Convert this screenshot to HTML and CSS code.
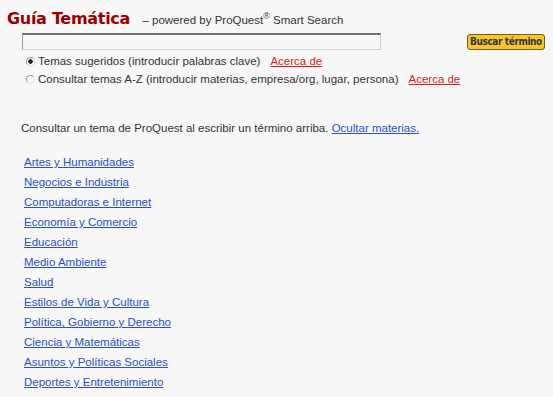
FILE: index.html
```html
<!DOCTYPE html>
<html lang="es">
<head>
	<meta charset="UTF-8">
	<title>Guía Temática</title>
	<link rel="stylesheet" href="styles.css">
</head>
<body>
	<div class="wrap">
		<h1 class="title"><span class="name">Guía Temática</span> <span class="powered">– powered by ProQuest<sup>®</sup> Smart Search</span></h1>
		<div class="search">
			<input type="text" class="term">
			<button class="btn">Buscar término</button>
		</div>
		<div class="opts">
			<label class="opt"><input type="radio" name="m" checked> Temas sugeridos (introducir palabras clave)</label><a href="#" class="about">Acerca de</a>
		</div>
		<div class="opts">
			<label class="opt"><input type="radio" name="m"> Consultar temas A-Z (introducir materias, empresa/org, lugar, persona)</label><a href="#" class="about">Acerca de</a>
		</div>
		<p class="intro">Consultar un tema de ProQuest al escribir un término arriba. <a href="#">Ocultar materias.</a></p>
		<ul class="topics">
			<li><a href="#">Artes y Humanidades</a></li>
			<li><a href="#">Negocios e Industria</a></li>
			<li><a href="#">Computadoras e Internet</a></li>
			<li><a href="#">Economía y Comercio</a></li>
			<li><a href="#">Educación</a></li>
			<li><a href="#">Medio Ambiente</a></li>
			<li><a href="#">Salud</a></li>
			<li><a href="#">Estilos de Vida y Cultura</a></li>
			<li><a href="#">Política, Gobierno y Derecho</a></li>
			<li><a href="#">Ciencia y Matemáticas</a></li>
			<li><a href="#">Asuntos y Políticas Sociales</a></li>
			<li><a href="#">Deportes y Entretenimiento</a></li>
		</ul>
	</div>
</body>
</html>
```
FILE: styles.css
```css
*{
	margin: 0;
	padding: 0;
}
body{
	background: #f7f7f7;
	font-family: "Liberation Sans", Arial, sans-serif;
	font-size: 11.5px;
	color: #333;
}
.wrap{padding: 5px 0 0 7px;}
.title{
	font-weight: normal;
	line-height: 22px;
	height: 22px;
	white-space: nowrap;
}
.title .name{
	font-family: "DejaVu Sans", Verdana, sans-serif;
	font-weight: bold;
	font-size: 16px;
	letter-spacing: -0.3px;
	color: #990000;
}
.title .powered{
	font-size: 11.5px;
	color: #333;
	margin-left: 6px;
}
.title sup{
	font-size: 9px;
	line-height: 0;
}
.search{
	display: flex;
	align-items: center;
	margin: 6px 0 0 15px;
	height: 17px;
}
.term{
	width: 359px;
	height: 17px;
	box-sizing: border-box;
	background: #f7f7f7;
	border: 1px solid #d4d4d4;
	border-top: 2px solid #6e6e6e;
	border-left: 1px solid #999;
}
.btn{
	margin-left: 86px;
	height: 16px;
	padding: 0 2px;
	background: #f7c530;
	border: 1px solid #7a5c0c;
	border-radius: 3px;
	font-family: "DejaVu Sans", sans-serif;
	font-stretch: condensed;
	font-weight: bold;
	font-size: 10px;
	letter-spacing: -0.4px;
	color: #333;
	white-space: nowrap;
}
.opts{
	display: flex;
	align-items: center;
	margin-left: 17px;
	height: 18px;
}
.search + .opts{margin-top: 2px;}
.opt{
	display: flex;
	align-items: center;
	white-space: nowrap;
}
.opt input{
	appearance: none;
	-webkit-appearance: none;
	width: 9px;
	height: 9px;
	margin: 0 3px 0 2px;
	border: 1px solid #999;
	border-right-color: #ddd;
	border-bottom-color: #ddd;
	border-radius: 50%;
	background: #fff;
}
.opt input:checked{
	background: radial-gradient(circle, #222 0, #222 2px, #fff 2.5px);
}
.about{
	color: #e0201c;
	margin-left: 10px;
}
.intro{
	margin: 32px 0 0 14px;
	line-height: 16px;
}
.intro a{color: #2a50c8;}
.topics{
	list-style: none;
	margin: 16px 0 0 17px;
}
.topics li{
	line-height: 20px;
}
.topics a{color: #2a50c8;}
```
